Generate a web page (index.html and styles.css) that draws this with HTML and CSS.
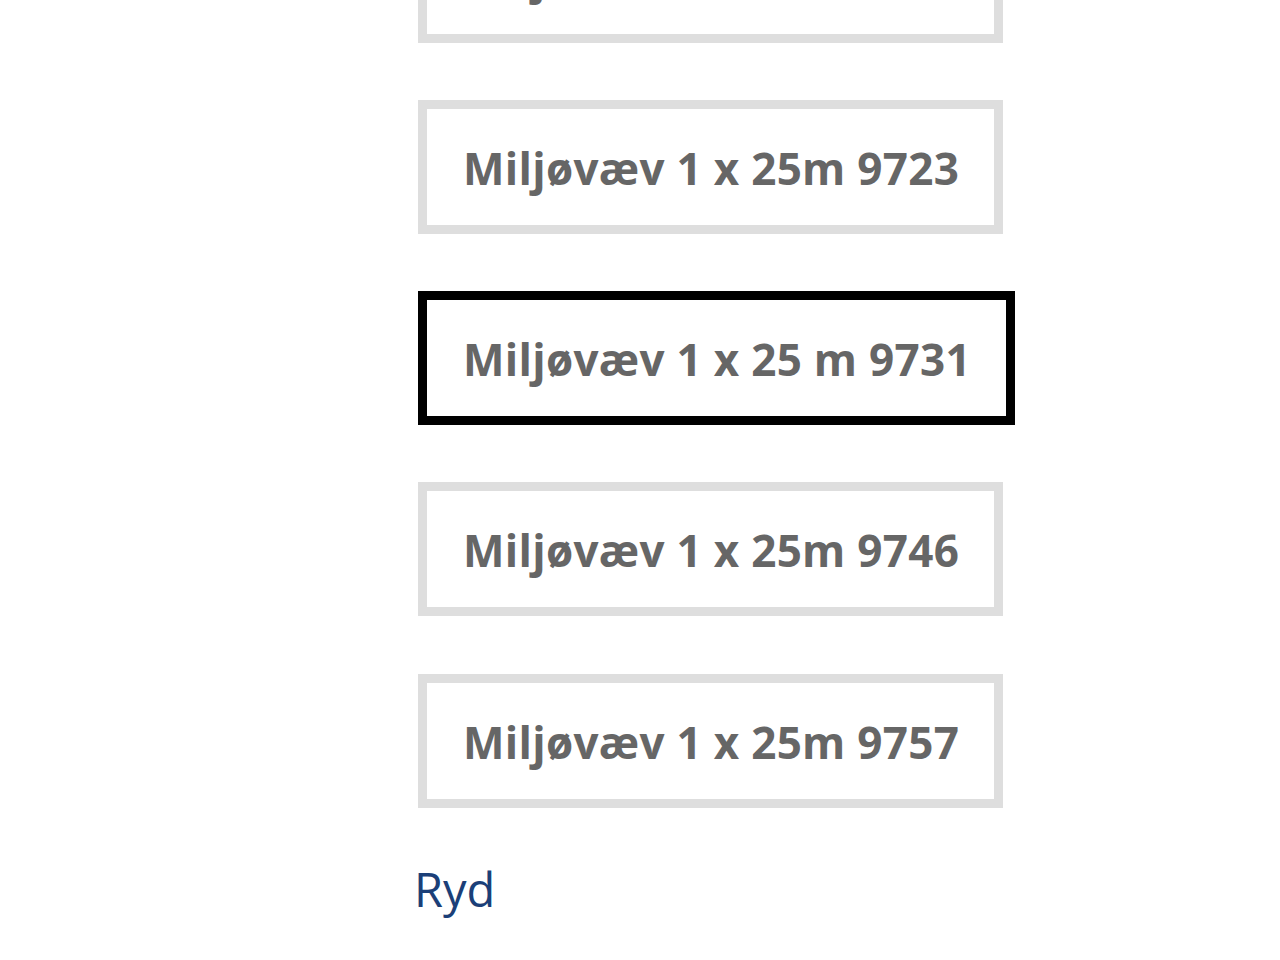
FILE: index.html
```html
<!DOCTYPE html>
<html lang="da">
<head>
<meta charset="utf-8">
<title>Miljøvæv</title>
<link rel="stylesheet" href="styles.css">
</head>
<body>
<div class="list">
  <button class="opt opt-first">Miljøvæv 1 x 25m 9716</button>
  <button class="opt">Miljøvæv 1 x 25m 9723</button>
  <button class="opt selected">Miljøvæv 1 x 25 m 9731</button>
  <button class="opt">Miljøvæv 1 x 25m 9746</button>
  <button class="opt">Miljøvæv 1 x 25m 9757</button>
  <a class="clear" href="#">Ryd</a>
</div>
</body>
</html>
```
FILE: styles.css
```css
html, body {
  margin: 0;
  padding: 0;
  background: #fff;
  overflow: hidden;
}
.list {
  display: flex;
  flex-direction: column;
  align-items: flex-start;
  gap: 57.33px;
  padding-left: 418px;
  margin-top: -91.5px;
}
.opt {
  box-sizing: border-box;
  height: 134px;
  font-family: "Open Sans", "Liberation Sans", sans-serif;
  font-weight: 700;
  font-size: 44px;
  letter-spacing: 0.3px;
  line-height: 59px;
  color: #666;
  background: #fff;
  border: 9px solid #dedede;
  padding: 30px 35px 27px 36px;
  margin: 0;
  border-radius: 0;
  white-space: nowrap;
  cursor: pointer;
}
.opt.selected {
  border-color: #000;
}
.clear {
  font-family: "Open Sans", "Liberation Sans", sans-serif;
  font-size: 47px;
  line-height: 60px;
  color: #1b3f78;
  text-decoration: none;
  margin-top: -6px;
  margin-left: -4px;
}
```
